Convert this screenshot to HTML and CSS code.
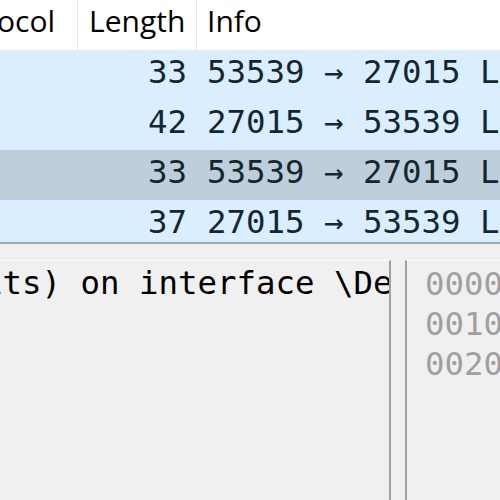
FILE: index.html
```html
<!DOCTYPE html>
<html>
<head>
<meta charset="utf-8">
<link rel="stylesheet" href="styles.css">
</head>
<body>
<div class="packets">
  <div class="hdr">
    <div class="c-proto"><span class="proto-txt">Protocol</span></div>
    <div class="c-len">Length</div>
    <div class="c-info">Info</div>
  </div>
  <div class="row">
    <div class="c-proto"></div>
    <div class="c-len">33</div>
    <div class="c-info">53539 → 27015 Len=5</div>
  </div>
  <div class="row">
    <div class="c-proto"></div>
    <div class="c-len">42</div>
    <div class="c-info">27015 → 53539 Len=14</div>
  </div>
  <div class="row sel">
    <div class="c-proto"></div>
    <div class="c-len">33</div>
    <div class="c-info">53539 → 27015 Len=5</div>
  </div>
  <div class="row">
    <div class="c-proto"></div>
    <div class="c-len">37</div>
    <div class="c-info">27015 → 53539 Len=9</div>
  </div>
</div>
<div class="lower">
  <div class="tree">
    <div class="line tree-first">(264 bits) on interface \Device\NPF_{4E27}, id 0</div>
  </div>
  <div class="hex">
    <div class="line">0000</div>
    <div class="line">0010</div>
    <div class="line">0020</div>
  </div>
</div>
</body>
</html>
```

FILE: styles.css
```css
html, body {
  margin: 0;
  padding: 0;
}
body {
  width: 500px;
  height: 500px;
  overflow: hidden;
  background: #f0f0f0;
}
.packets {
  height: 242px;
  overflow: hidden;
  border-bottom: 2px solid #a3a7ab;
  background: #ffffff;
}
.hdr {
  display: flex;
  height: 50px;
  background: #ffffff;
  font-family: "Open Sans", sans-serif;
  font-size: 30px;
  line-height: 41px;
  color: #000000;
  white-space: nowrap;
}
.hdr > div {
  overflow: hidden;
  box-sizing: border-box;
}
.c-proto {
  width: 77px;
  flex: none;
  overflow: hidden;
}
.c-len {
  width: 120px;
  flex: none;
  box-sizing: border-box;
}
.c-info {
  flex: 1;
  white-space: nowrap;
  overflow: hidden;
}
.hdr .c-len {
  border-left: 1px solid #e5e5e5;
  border-right: 1px solid #e5e5e5;
  padding-left: 11px;
}
.hdr .c-info {
  padding-left: 10px;
}
.proto-txt {
  display: inline-block;
  margin-left: -62px;
}
.row {
  display: flex;
  height: 50px;
  box-sizing: border-box;
  padding-bottom: 6px;
  background: #daeeff;
  color: #12272e;
  font-family: "DejaVu Sans Mono", monospace;
  font-size: 32.4px;
  line-height: 44px;
  white-space: nowrap;
}
.row.sel {
  background: #bfcedb;
}
.row .c-len {
  text-align: right;
  padding-right: 10px;
}
.row .c-info {
  padding-left: 10px;
}
.lower {
  display: flex;
  gap: 14px;
  margin-top: 16px;
  height: 240px;
}
.tree, .hex {
  box-sizing: border-box;
  border-top: 1px solid #fbfbfb;
  overflow: hidden;
  font-family: "DejaVu Sans Mono", monospace;
  font-size: 32.4px;
  white-space: nowrap;
}
.tree {
  width: 391px;
  flex: none;
  border-right: 2px solid #a0a0a0;
  color: #000000;
  line-height: 43px;
  padding-top: 1px;
}
.tree-first {
  margin-left: -134px;
}
.hex {
  flex: 1;
  border-left: 2px solid #a0a0a0;
  color: #a0a0a0;
  padding-left: 18px;
  padding-top: 3px;
  line-height: 40px;
}
```
